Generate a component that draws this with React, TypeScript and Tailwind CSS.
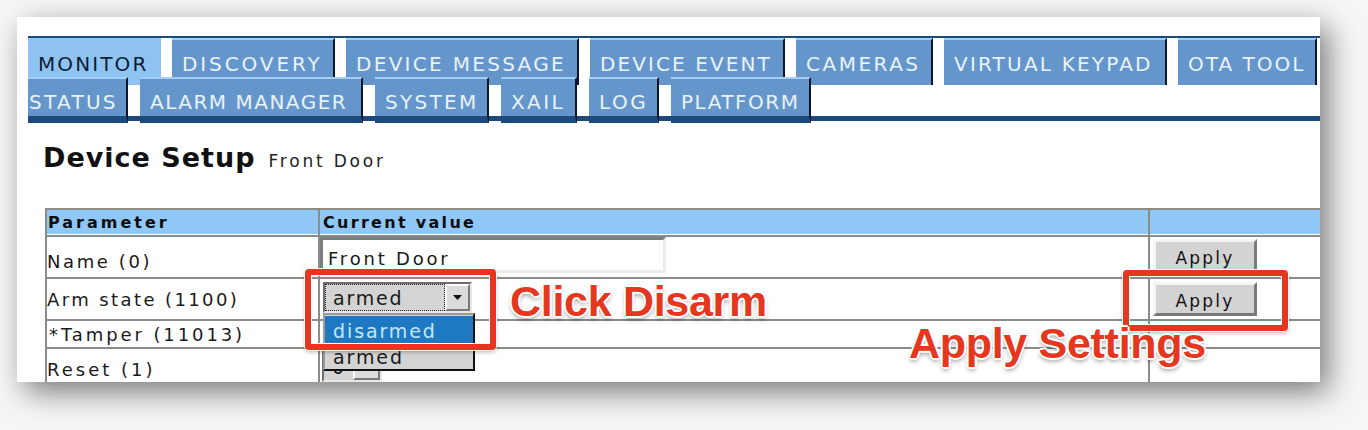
import React from 'react';

interface Tab {
  label: string;
  width: string;
  tracking: string;
  active?: boolean;
  flush?: boolean;
}

const topTabs: Tab[] = [
  { label: 'MONITOR', width: 'w-[133px]', tracking: 'tracking-[2.1px]', active: true },
  { label: 'DISCOVERY', width: 'w-[163px]', tracking: 'tracking-[2.9px]' },
  { label: 'DEVICE MESSAGE', width: 'w-[233px]', tracking: 'tracking-[2.3px]' },
  { label: 'DEVICE EVENT', width: 'w-[195px]', tracking: 'tracking-[2.1px]' },
  { label: 'CAMERAS', width: 'w-[137px]', tracking: 'tracking-[2.5px]' },
  { label: 'VIRTUAL KEYPAD', width: 'w-[223px]', tracking: 'tracking-[2.2px]' },
  { label: 'OTA TOOL', width: 'w-[139px]', tracking: 'tracking-[2px]' },
];

const bottomTabs: Tab[] = [
  { label: 'STATUS', width: 'w-[100px]', tracking: 'tracking-[2.3px]', flush: true },
  { label: 'ALARM MANAGER', width: 'w-[223px]', tracking: 'tracking-[1.5px]' },
  { label: 'SYSTEM', width: 'w-[114px]', tracking: 'tracking-[2.3px]' },
  { label: 'XAIL', width: 'w-[76px]', tracking: 'tracking-[2.4px]' },
  { label: 'LOG', width: 'w-[70px]', tracking: 'tracking-[2.6px]' },
  { label: 'PLATFORM', width: 'w-[140px]', tracking: 'tracking-[1.5px]' },
];

const annotation =
  "font-['Liberation_Sans',Arial,sans-serif] font-bold text-[43px] leading-none tracking-[-0.3px] text-[#e4371d] whitespace-nowrap [text-shadow:1px_1px_0_#fff,-1px_-1px_0_#fff,1px_-1px_0_#fff,-1px_1px_0_#fff,2px_0_0_#fff,-2px_0_0_#fff,0_2px_0_#fff,0_-2px_0_#fff,0_3px_5px_rgba(0,0,0,0.45)]";

const redBox =
  'absolute z-20 border-[6px] border-[#e4371d] rounded-[4px] shadow-[0_0_0_1px_rgba(255,255,255,0.9),inset_0_0_0_1px_rgba(255,255,255,0.9),0_2px_4px_rgba(0,0,0,0.3)]';

function DownArrow() {
  return (
    <svg width="9" height="5" viewBox="0 0 9 5">
      <polygon points="0,0 9,0 4.5,5" fill="#111" />
    </svg>
  );
}

function ApplyButton({ top }: { top: string }) {
  return (
    <div
      className={`${top} ml-[3px] h-[34px] w-[104px] border-[3px] border-t-[#f5f5f5] border-l-[#f5f5f5] border-r-[#7a7a7a] border-b-[#7a7a7a] bg-[#d3d3d3] pt-[6px] text-center text-[17px] leading-5 tracking-[2.2px] text-[#111]`}
    >
      Apply
    </div>
  );
}

export default function App() {
  return (
    <div className="h-[430px] w-[1368px] overflow-hidden bg-[#f6f6f6] pl-[17px] pt-[17px]">
      <div className="relative h-[365px] w-[1303px] overflow-hidden bg-white shadow-[8px_10px_28px_rgba(0,0,0,0.5)] font-['DejaVu_Sans',Verdana,sans-serif]">
        {/* tab menu */}
        <div className="pl-[11px] pt-[19px]">
          <div className="w-[1300px] border-t-2 border-b-[5px] border-[#1c4a7a]">
            <div className="flex gap-[11px]">
              {topTabs.map((t) => (
                <div
                  key={t.label}
                  className={`${t.width} ${t.tracking} h-[47px] shrink-0 whitespace-nowrap border-t-2 border-r-2 pl-[10px] pt-[14px] text-[20px] leading-5 ${
                    t.active
                      ? 'border-t-[#8fc4f2] border-r-transparent bg-[#8fc4f2] text-[#0c1d33]'
                      : 'border-t-[#a3cff5] border-r-[#0b1829] bg-[#6596cb] text-[#e9f2fb]'
                  }`}
                >
                  {t.label}
                </div>
              ))}
            </div>
            <div className="-mb-[7px] -mt-[8px] flex gap-[12px]">
              {bottomTabs.map((t) => (
                <div
                  key={t.label}
                  className={`${t.width} ${t.tracking} h-[46px] shrink-0 whitespace-nowrap border-t-2 border-r-2 border-b-[7px] border-t-[#a3cff5] border-r-[#0b1829] border-b-[#1c4a7a] bg-[#6596cb] pt-[13px] text-[20px] leading-5 text-[#e9f2fb] ${
                    t.flush ? 'pl-px' : 'pl-[10px]'
                  }`}
                >
                  {t.label}
                </div>
              ))}
            </div>
          </div>
        </div>

        {/* heading */}
        <div className="ml-[26px] mt-[21px] flex h-[32px] items-baseline gap-[13px]">
          <h1 className="text-[27px] font-bold leading-[32px] tracking-[1px] text-[#111]">Device Setup</h1>
          <span className="text-[17px] tracking-[2.8px] text-[#222]">Front Door</span>
        </div>

        {/* parameter table */}
        <div className="ml-[28px] mt-[34px] w-[1400px] border-t-2 border-l-2 border-[#8b8b87] text-[18px] tracking-[2.6px] text-[#1a1a1a]">
          <div className="flex h-[27px] border-b-2 border-[#8b8b87] bg-[#8fc7f7] text-[16px] font-bold leading-5 text-[#0d0d0d] shadow-[inset_0_-1px_0_#fff]">
            <div className="w-[273px] shrink-0 border-r-2 border-[#8b8b87] pl-px pt-[3px] tracking-[3px]">Parameter</div>
            <div className="w-[830px] shrink-0 border-r-2 border-[#8b8b87] pl-[3px] pt-[3px] tracking-[2.3px]">Current value</div>
            <div className="flex-1" />
          </div>

          <div className="flex h-[42px] border-b-2 border-[#8b8b87]">
            <div className="w-[273px] shrink-0 border-r-2 border-[#8b8b87] pt-[15px] leading-5">Name (0)</div>
            <div className="w-[830px] shrink-0 border-r-2 border-[#8b8b87]">
              <div className="h-[36px] w-[346px] border-[3px] border-t-[#7d7d7d] border-l-[#7d7d7d] border-r-[#ececec] border-b-[#ececec] bg-white pl-[5px] pt-[9px] leading-5 tracking-[2.8px]">
                Front Door
              </div>
            </div>
            <div className="flex-1">
              <ApplyButton top="mt-[2px]" />
            </div>
          </div>

          <div className="flex h-[42px] border-b-2 border-[#8b8b87]">
            <div className="w-[273px] shrink-0 border-r-2 border-[#8b8b87] pt-[11px] leading-5 tracking-[2.4px]">Arm state (1100)</div>
            <div className="w-[830px] shrink-0 border-r-2 border-[#8b8b87]">
              <div className="relative ml-[3px] mt-[3px] flex h-[31px] w-[149px] border-2 border-t-[#6e6e6e] border-l-[#6e6e6e] border-r-[#e8e8e8] border-b-[#e8e8e8] bg-[#d4d4d4]">
                <div className="flex-1 border border-dotted border-[#222] pl-[7px] pt-[2px] text-[19px] leading-[23px] tracking-[1.8px]">
                  armed
                </div>
                <div className="flex w-[25px] items-center justify-center border-2 border-t-white border-l-white border-r-[#7a7a7a] border-b-[#7a7a7a] bg-[#dcdcdc]">
                  <DownArrow />
                </div>
                {/* open option list */}
                <div className="absolute -left-[2px] top-[29px] z-10 h-[58px] w-[152px] border-2 border-t-[#9a9a9a] border-l-[#9a9a9a] border-r-[#111] border-b-[#111] bg-[#d4d4d4] pt-px text-[19px] tracking-[1.9px]">
                  <div className="h-[27px] bg-[#1f79c2] pl-[8px] pt-[3px] leading-[24px] text-[#c4e8ff]">disarmed</div>
                  <div className="h-[26px] pl-[8px] pt-[2px] leading-[24px] text-[#1a1a1a]">armed</div>
                </div>
              </div>
            </div>
            <div className="flex-1">
              <ApplyButton top="mt-[3px]" />
            </div>
          </div>

          <div className="flex h-[28px] border-b-2 border-[#8b8b87]">
            <div className="w-[273px] shrink-0 border-r-2 border-[#8b8b87] pl-[2px] pt-[4px] leading-5 tracking-[2.9px]">*Tamper (11013)</div>
            <div className="w-[830px] shrink-0 border-r-2 border-[#8b8b87]" />
            <div className="flex-1" />
          </div>

          <div className="flex h-[60px]">
            <div className="w-[273px] shrink-0 border-r-2 border-[#8b8b87] pt-[11px] leading-5 tracking-[3px]">Reset (1)</div>
            <div className="w-[830px] shrink-0 border-r-2 border-[#8b8b87]">
              <div className="ml-[2px] mt-[2px] flex h-[31px] w-[60px] border-2 border-t-[#6e6e6e] border-l-[#6e6e6e] border-r-[#e8e8e8] border-b-[#e8e8e8] bg-[#d4d4d4]">
                <div className="flex-1 pl-[8px] pt-[3px] text-[19px] leading-[23px]">0</div>
                <div className="flex w-[27px] items-center justify-center border-2 border-t-white border-l-white border-r-[#7a7a7a] border-b-[#7a7a7a] bg-[#dcdcdc]">
                  <DownArrow />
                </div>
              </div>
            </div>
            <div className="flex-1" />
          </div>
        </div>

        {/* annotations */}
        <div className={`${redBox} left-[288px] top-[252px] h-[81px] w-[191px]`} />
        <div className={`${annotation} absolute left-[493px] top-[263px] z-20`}>Click Disarm</div>
        <div className={`${redBox} left-[1106px] top-[253px] h-[61px] w-[165px]`} />
        <div className={`${annotation} absolute left-[892px] top-[305px] z-20`}>Apply Settings</div>
      </div>
    </div>
  );
}
